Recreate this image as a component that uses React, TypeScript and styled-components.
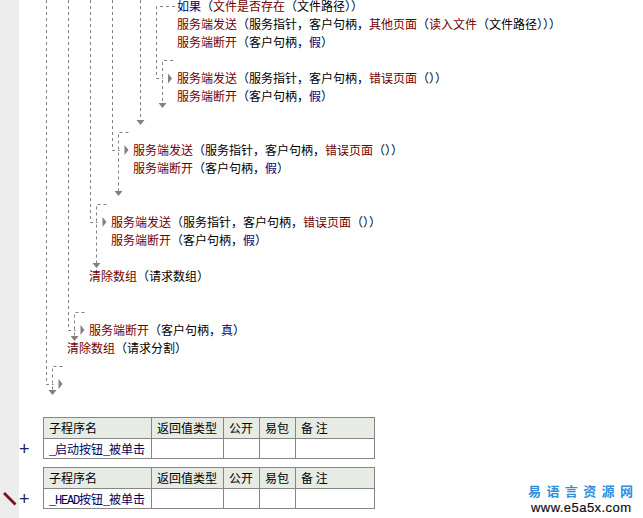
import { Fragment } from "react";
import styled, { createGlobalStyle } from "styled-components";

const GlobalStyle = createGlobalStyle`
  html, body {
    margin: 0;
    padding: 0;
    background: #fff;
  }
`;

const Page = styled.div`
  position: relative;
  display: flex;
  width: 643px;
  height: 518px;
  overflow: hidden;
  font-family: "Noto Sans CJK SC", "Liberation Sans", sans-serif;
  font-size: 12px;
  color: #000;
`;

const Gutter = styled.div`
  flex: 0 0 19px;
  background: #ececec;
`;

const Editor = styled.div`
  flex: 1;
  display: flex;
  flex-direction: column;
  margin-top: -3px;
`;

const CodeBlock = styled.div`
  display: flex;
  flex-direction: column;
  margin-bottom: 60px;
`;

const CodeRow = styled.div<{ $indent: number }>`
  height: 18px;
  line-height: 18px;
  padding-left: ${(p) => p.$indent}px;
  white-space: pre;
`;

const Cmd = styled.span`
  color: #700000;
`;

const Key = styled.span`
  color: #000080;
`;

const ProcBlock = styled.div`
  display: flex;
  flex-direction: column;
  gap: 8px;
`;

const ProcRow = styled.div`
  display: flex;
  align-items: flex-end;
`;

const Plus = styled.div`
  flex: 0 0 24px;
  height: 20px;
  line-height: 20px;
  box-sizing: border-box;
  font-family: "Liberation Sans", sans-serif;
  font-size: 18px;
  color: #202060;
`;

const ProcTable = styled.table`
  border-collapse: collapse;
  table-layout: fixed;
  width: 331px;
  height: 42px;

  th,
  td {
    border: 1px solid #868686;
    padding: 0 0 0 5px;
    font-weight: 400;
    text-align: left;
    white-space: pre;
    overflow: hidden;
  }

  th {
    height: 20px;
    line-height: 20px;
    background: #e6ebe4;
  }

  td {
    height: 19px;
    line-height: 19px;
    color: #000060;
  }
`;

const Ascii = styled.span`
  font-family: "Liberation Mono", monospace;
  font-size: 12px;
  letter-spacing: -1.2px;
  line-height: 1;
`;

const Connectors = styled.svg`
  position: absolute;
  top: 0;
  left: 0;
  pointer-events: none;
`;

const Pencil = styled.svg`
  position: absolute;
  left: 2px;
  top: 491px;
`;

const Watermark = styled.div`
  position: absolute;
  left: 528px;
  top: 481px;
  display: flex;
  flex-direction: column;
`;

const WatermarkTitle = styled.div`
  height: 19px;
  line-height: 19px;
  font-size: 13px;
  font-weight: 700;
  letter-spacing: 5.4px;
  color: #2f8fdc;
  white-space: nowrap;
`;

const WatermarkUrl = styled.div`
  padding-left: 3px;
  font-family: "Liberation Sans", sans-serif;
  font-size: 13px;
  line-height: 15px;
  letter-spacing: 0.45px;
  color: #111;
  -webkit-text-stroke: 0.2px #111;
  white-space: nowrap;
`;

type Token = { t: string; k?: "cmd" | "key" };

const cmd = (t: string): Token => ({ t, k: "cmd" });
const key = (t: string): Token => ({ t, k: "key" });
const txt = (t: string): Token => ({ t });

const sendError = [cmd("服务端发送"), txt("（服务指针，客户句柄，"), cmd("错误页面"), txt("（））")];
const closeFalse = [cmd("服务端断开"), txt("（客户句柄，"), key("假"), txt("）")];

const rows: { indent: number; tokens: Token[] }[] = [
  { indent: 158, tokens: [key("如果"), txt("（"), cmd("文件是否存在"), txt("（文件路径））")] },
  {
    indent: 158,
    tokens: [
      cmd("服务端发送"),
      txt("（服务指针，客户句柄，"),
      cmd("其他页面"),
      txt("（"),
      cmd("读入文件"),
      txt("（文件路径）））"),
    ],
  },
  { indent: 158, tokens: closeFalse },
  { indent: 0, tokens: [] },
  { indent: 158, tokens: sendError },
  { indent: 158, tokens: closeFalse },
  { indent: 0, tokens: [] },
  { indent: 0, tokens: [] },
  { indent: 114, tokens: sendError },
  { indent: 114, tokens: closeFalse },
  { indent: 0, tokens: [] },
  { indent: 0, tokens: [] },
  { indent: 92, tokens: sendError },
  { indent: 92, tokens: closeFalse },
  { indent: 0, tokens: [] },
  { indent: 70, tokens: [cmd("清除数组"), txt("（请求数组）")] },
  { indent: 0, tokens: [] },
  { indent: 0, tokens: [] },
  { indent: 70, tokens: [cmd("服务端断开"), txt("（客户句柄，"), key("真"), txt("）")] },
  { indent: 48, tokens: [cmd("清除数组"), txt("（请求分割）")] },
];

// vertical run down from the top, elbow into a small right triangle,
// then a second run that starts above and ends on a down arrow
const branches = [
  { x: 46.5, elbowY: 384, innerTop: 366, arrowY: 393 },
  { x: 68.5, elbowY: 330, innerTop: 312, arrowY: 339 },
  { x: 90.5, elbowY: 222, innerTop: 204, arrowY: 266 },
  { x: 112.5, elbowY: 150, innerTop: 132, arrowY: 194 },
];

const dash = { stroke: "#808080", strokeWidth: 1, strokeDasharray: "3 3", fill: "none" };
const tri = "#808080";

function FlowLines() {
  return (
    <Connectors width="643" height="518">
      {branches.map((b) => {
        const inner = b.x + 6;
        return (
          <Fragment key={b.x}>
            <path d={`M${b.x} 0V${b.elbowY + 0.5}H${b.x + 7}`} {...dash} />
            <path d={`M${inner + 10} ${b.innerTop + 0.5}H${inner}V${b.arrowY - 3}`} {...dash} />
            <path d={`M${inner + 6} ${b.elbowY - 5}l4 5l-4 5z`} fill={tri} />
            <path d={`M${inner - 4} ${b.arrowY - 3}h8l-4 5z`} fill={tri} />
          </Fragment>
        );
      })}
      <path d="M140.5 0V120" {...dash} />
      <path d="M136.500 120h8l-4 5z" fill={tri} />
      <path d="M175 6.500H156.500V78.500H163" {...dash} />
      <path d="M173 60.500H162.500V103" {...dash} />
      <path d="M168 73.500l4 5l-4 5z" fill={tri} />
      <path d="M158.500 103h8l-4 5z" fill={tri} />
    </Connectors>
  );
}

function Proc({ name }: { name: React.ReactNode }) {
  return (
    <ProcRow>
      <Plus>+</Plus>
      <ProcTable>
        <colgroup>
          <col width="108" />
          <col width="72" />
          <col width="36" />
          <col width="36" />
          <col width="79" />
        </colgroup>
        <thead>
          <tr>
            <th>子程序名</th>
            <th>返回值类型</th>
            <th>公开</th>
            <th>易包</th>
            <th>备 注</th>
          </tr>
        </thead>
        <tbody>
          <tr>
            <td>{name}</td>
            <td />
            <td />
            <td />
            <td />
          </tr>
        </tbody>
      </ProcTable>
    </ProcRow>
  );
}

export default function App() {
  return (
    <Page>
      <GlobalStyle />
      <Gutter />
      <Editor>
        <CodeBlock>
          {rows.map((row, i) => (
            <CodeRow key={i} $indent={row.indent}>
              {row.tokens.map((tk, j) =>
                tk.k === "cmd" ? (
                  <Cmd key={j}>{tk.t}</Cmd>
                ) : tk.k === "key" ? (
                  <Key key={j}>{tk.t}</Key>
                ) : (
                  <span key={j}>{tk.t}</span>
                )
              )}
            </CodeRow>
          ))}
        </CodeBlock>
        <ProcBlock>
          <Proc
            name={
              <>
                <Ascii>_</Ascii>启动按钮<Ascii>_</Ascii>被单击
              </>
            }
          />
          <Proc
            name={
              <>
                <Ascii>_HEAD</Ascii>按钮<Ascii>_</Ascii>被单击
              </>
            }
          />
        </ProcBlock>
      </Editor>
      <FlowLines />
      <Pencil width="15" height="15" viewBox="0 0 15 15">
        <path d="M1 3L3 1L14.500 12.500L12.500 14.500z" fill="#7a1020" />
      </Pencil>
      <Watermark>
        <WatermarkTitle>易语言资源网</WatermarkTitle>
        <WatermarkUrl>www.e5a5x.com</WatermarkUrl>
      </Watermark>
    </Page>
  );
}
